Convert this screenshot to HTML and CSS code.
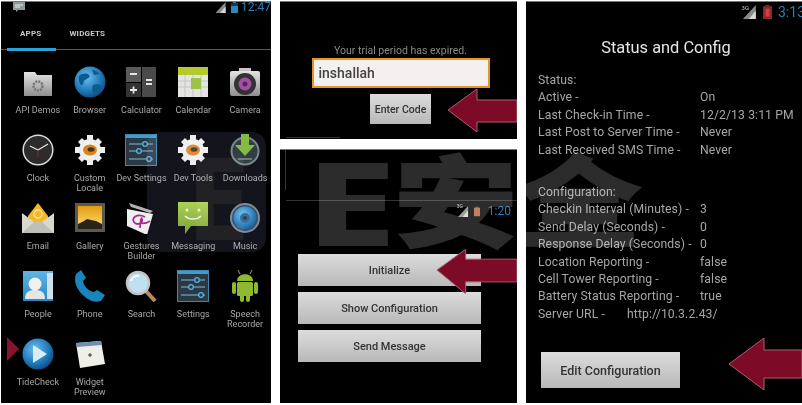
FILE: index.html
```html
<!DOCTYPE html>
<html lang="en">
<head>
<meta charset="utf-8">
<title>TideCheck screens</title>
<link rel="stylesheet" href="styles.css">
</head>
<body>
<svg class="defs" width="0" height="0" aria-hidden="true">
  <defs>
    <linearGradient id="gGrey" x1="0" y1="0" x2="0" y2="1"><stop offset="0" stop-color="#e4e4e4"/><stop offset="1" stop-color="#8f8f8f"/></linearGradient>
    <radialGradient id="gBlue" cx=".4" cy=".35" r=".75"><stop offset="0" stop-color="#6cc0ee"/><stop offset=".6" stop-color="#1f78b8"/><stop offset="1" stop-color="#0b3f70"/></radialGradient>
    <linearGradient id="gSun" x1="0" y1="0" x2="0" y2="1"><stop offset="0" stop-color="#e09a10"/><stop offset="1" stop-color="#ffe27a"/></linearGradient>
    <linearGradient id="gGreen" x1="0" y1="0" x2="0" y2="1"><stop offset="0" stop-color="#a4cc3e"/><stop offset="1" stop-color="#6f9a22"/></linearGradient>
    <linearGradient id="gCard" x1="0" y1="0" x2="0" y2="1"><stop offset="0" stop-color="#5fb5e8"/><stop offset="1" stop-color="#2a86c4"/></linearGradient>
    <symbol id="signal" viewBox="0 0 12 12"><path d="M0 12 11 0v12z" fill="#8a8a8a"/><path d="M5 12 11 5v7z" fill="#d8d8d8"/></symbol>
    <symbol id="cog" viewBox="0 0 32 32">
      <circle cx="16" cy="16" r="11" fill="#f2f2f2"/>
      <path d="M13 1h6v6h-6zM13 25h6v6h-6zM1 13h6v6H1zM25 13h6v6h-6zM4 8l4-4 5 5-4 4zM24 4l4 4-5 5-4-4zM4 24l5-5 4 4-5 5zM19 23l4-4 5 5-4 4z" fill="#ededed"/>
      <ellipse cx="16" cy="16" rx="7" ry="5.5" fill="#d9851f"/>
      <ellipse cx="17" cy="15.500" rx="3.500" ry="2.200" fill="#4a3218"/>
    </symbol>
    <symbol id="sliders" viewBox="0 0 32 32">
      <rect x=".5" y=".5" width="31" height="31" fill="#2a3a44" stroke="#3d86ad"/>
      <rect x="1" y="1" width="30" height="3" fill="#3f9ccc"/>
      <path d="M4 10h24M4 17h24M4 25h24" stroke="#6d8c9c" stroke-width="1.300"/>
      <circle cx="20" cy="10" r="2.300" fill="#2a3a44" stroke="#59b4e2" stroke-width="1.300"/>
      <circle cx="14" cy="17" r="2.300" fill="#2a3a44" stroke="#59b4e2" stroke-width="1.300"/>
      <circle cx="24" cy="25" r="2.300" fill="#2a3a44" stroke="#59b4e2" stroke-width="1.300"/>
    </symbol>
  </defs>
</svg>

<main class="page">
  <section class="panel launcher">
    <header class="status">
      <svg class="notif" viewBox="0 0 12 10"><path d="M0 0h12v8H5L3 10V8H0z" fill="#8d9a9a"/><path d="M2 3h8M2 5h5" stroke="#eee"/></svg>
      <svg class="sig" viewBox="0 0 12 12"><use href="#signal"/></svg>
      <svg class="bat" viewBox="0 0 7 11"><rect y="1" width="7" height="10" fill="#2d87ba"/><rect x="2" width="3" height="1" fill="#2d87ba"/><rect y="1" width="7" height="3" fill="#0d3a55"/></svg>
      <span class="time">12:47</span>
    </header>
    <nav class="tabs">
      <span class="tab tab-apps">APPS</span>
      <span class="tab">WIDGETS</span>
    </nav>
    <div class="grid">
      <div class="app"><svg class="icon" viewBox="0 0 32 32"><path d="M2 6h11l2 3h15v21H2z" fill="url(#gGrey)"/><circle cx="16" cy="20" r="4.500" fill="none" stroke="#777" stroke-width="2.500" stroke-dasharray="2 1"/></svg><span>API Demos</span></div>
      <div class="app"><svg class="icon" viewBox="0 0 32 32"><circle cx="16" cy="16" r="15.500" fill="url(#gBlue)"/><path d="M5 10c4-3 8-3 10-1s-2 4-4 5-1 4-3 5-4-5-3-9zM19 19c3-1 7-1 8 1s-3 6-6 7-3-6-2-8zM18 4c3 0 6 2 7 4l-5 1z" fill="#0d5a8c"/></svg><span>Browser</span></div>
      <div class="app"><svg class="icon" viewBox="0 0 32 32"><rect x="1" y="1" width="15" height="15" fill="#5a5a5a"/><rect x="17" y="1" width="14" height="30" fill="#4a4a4a"/><rect x="1" y="17" width="15" height="14" fill="#333"/><path d="M5 8h7M21 14h6M21 18h6M5 24h7M8.500 20.500v7" stroke="#e6e6e6" stroke-width="1.800" fill="none"/></svg><span>Calculator</span></div>
      <div class="app"><svg class="icon" viewBox="0 0 32 32"><rect x="1" y="1" width="30" height="30" fill="#e4e4e0"/><rect x="1" y="1" width="30" height="8" fill="#b4c92c"/><path d="M1 15h30M1 21h30M8 9v22M16 9v22M24 9v22" stroke="#c4c4c4"/><rect x="14" y="12" width="10" height="11" fill="#9dc24a"/></svg><span>Calendar</span></div>
      <div class="app"><svg class="icon" viewBox="0 0 32 32"><rect x="10" y="2" width="12" height="5" fill="#c4c4c4"/><rect x="1" y="5" width="30" height="25" rx="2" fill="url(#gGrey)"/><circle cx="16" cy="18" r="11" fill="#333"/><circle cx="16" cy="18" r="6.500" fill="#a24fa6"/><circle cx="16" cy="18" r="2.500" fill="#5d2360"/></svg><span>Camera</span></div>

      <div class="app"><svg class="icon" viewBox="0 0 32 32"><circle cx="16" cy="16" r="14.800" fill="#2e2c2a" stroke="#dcdcdc" stroke-width="1.500"/><path d="M16 16 8 12M16 16 26 10" stroke="#e8e8e8" stroke-width="1.200"/><path d="M16 16v7" stroke="#733" stroke-width="1"/></svg><span>Clock</span></div>
      <div class="app"><svg class="icon" viewBox="0 0 32 32"><use href="#cog"/></svg><span>Custom Locale</span></div>
      <div class="app"><svg class="icon" viewBox="0 0 32 32"><use href="#sliders"/></svg><span>Dev Settings</span></div>
      <div class="app"><svg class="icon" viewBox="0 0 32 32"><use href="#cog"/></svg><span>Dev Tools</span></div>
      <div class="app"><svg class="icon" viewBox="0 0 32 32"><circle cx="16" cy="17" r="13.500" fill="#222c2c" stroke="#6d7d7d" stroke-width="2"/><path d="M12 0h8v11h6l-10 11L6 11h6z" fill="#79b52b"/><path d="M9 25h14" stroke="#8a9a9a" stroke-width="1.200"/></svg><span>Downloads</span></div>

      <div class="app"><svg class="icon" viewBox="0 0 32 32"><path d="M6 14 16 1l10 13v8H6z" fill="#f2b92a"/><circle cx="16" cy="12" r="4" fill="none" stroke="#ffe596" stroke-width="1.300"/><path d="M0 11l16 12 16-12v20H0z" fill="#d8d8d0"/><path d="M0 31l12-11h8l12 11z" fill="#bfbfb8"/></svg><span>Email</span></div>
      <div class="app"><svg class="icon" viewBox="0 0 32 32"><rect x="1" y="1" width="30" height="29" fill="#5a5a54"/><rect x="4" y="4" width="24" height="23" fill="url(#gSun)"/><path d="M4 22l6-3 3-2 4 1 5 1 6 3v5H4z" fill="#2a2418"/></svg><span>Gallery</span></div>
      <div class="app"><svg class="icon" viewBox="0 0 32 32"><path d="M4 1l24 8-3 2-19-6z" fill="#aeb4b4"/><path d="M2 7l26 5-6 21L2 24z" fill="#efeeee"/><path d="M20 15c-8-4-14 1-11 5s9 1 8-3-2 9-2 9M15 21c4 1 7 0 10-2" fill="none" stroke="#a42b8e" stroke-width="1.800"/></svg><span>Gestures Builder</span></div>
      <div class="app"><svg class="icon" viewBox="0 0 32 32"><path d="M1 0h30v24H14l-6 8v-8H1z" fill="url(#gGreen)"/><circle cx="10" cy="8" r="1.500" fill="#eef6d0"/><circle cx="22" cy="8" r="1.500" fill="#eef6d0"/><path d="M8 14c4 4 12 4 16 0" fill="none" stroke="#eef6d0" stroke-width="1.500"/></svg><span>Messaging</span></div>
      <div class="app"><svg class="icon" viewBox="0 0 32 32"><circle cx="16" cy="16" r="14" fill="#24405f" stroke="#72808a" stroke-width="2"/><circle cx="16" cy="16" r="11.500" fill="url(#gBlue)"/><circle cx="16" cy="16" r="5" fill="#2f5e8c"/><circle cx="16" cy="16" r="2" fill="#183050"/></svg><span>Music</span></div>

      <div class="app"><svg class="icon" viewBox="0 0 32 32"><rect x="1" y="1" width="30" height="30" fill="url(#gCard)"/><rect x="25" y="3" width="6" height="26" fill="#cfe2ec"/><circle cx="13" cy="14" r="6.500" fill="#f0f0f0"/><path d="M3 29c0-7 4-9 10-9s10 2 10 9z" fill="#e6e6e6"/></svg><span>People</span></div>
      <div class="app"><svg class="icon" viewBox="0 0 32 32"><path d="M2 4 7 0l5 8-3 3c1 5 5 10 11 11l3-2 8 5-4 6c-8 3-16-3-21-9S0 9 2 4z" fill="#1a84bc"/></svg><span>Phone</span></div>
      <div class="app"><svg class="icon" viewBox="0 0 32 32"><path d="M21 21l9 10" stroke="#b98a58" stroke-width="4"/><circle cx="13" cy="13" r="11" fill="#bfe0ef" stroke="#c4c4c4" stroke-width="2.500"/><path d="M6 11c1-4 5-6 8-5" stroke="#fff" stroke-width="2" fill="none"/></svg><span>Search</span></div>
      <div class="app"><svg class="icon" viewBox="0 0 32 32"><use href="#sliders"/></svg><span>Settings</span></div>
      <div class="app"><svg class="icon" viewBox="0 0 32 32"><g fill="#8fb92e"><path d="M8 11c0-9 16-9 16 0z"/><rect x="8" y="12" width="16" height="14" rx="1.500"/><rect x="3" y="12" width="4" height="12" rx="2"/><rect x="25" y="12" width="4" height="12" rx="2"/><rect x="11" y="24" width="4" height="8" rx="2"/><rect x="17" y="24" width="4" height="8" rx="2"/></g><path d="M11 4 9 0M21 4l2-4" stroke="#8fb92e"/></svg><span>Speech Recorder</span></div>

      <div class="app"><svg class="icon" viewBox="0 0 32 32"><circle cx="16" cy="16" r="15.500" fill="url(#gBlue)"/><path d="M11 7l14 9-14 9z" fill="#d8ecf8"/></svg><span>TideCheck</span></div>
      <div class="app"><svg class="icon" viewBox="0 0 32 32"><path d="M2 5 27 3l4 23L6 30z" fill="#efefe8"/><path d="M2 5 27 3l.6 4L2.600 9z" fill="#6b8fb5"/><path d="M14 17h4M16 15v4" stroke="#333"/></svg><span>Widget Preview</span></div>
    </div>
    <svg class="marker" viewBox="0 0 12 24"><path d="M0 0l12 12L0 24z" fill="#8a1231"/></svg>
  </section>

  <div class="mid">
    <section class="panel trial">
      <p class="expired">Your trial period has expired.</p>
      <div class="code-input">inshallah</div>
      <div class="btn btn-code">Enter Code</div>
      <svg class="arrow arrow-code" viewBox="0 0 69 43"><path d="M0 21 29 0v11h40v22H29v10z" fill="#7d0a26" stroke="#a8606e"/></svg>
      <i class="scan scan-a"></i>
    </section>
    <section class="panel home">
      <i class="scan scan-b"></i>
      <i class="scan scan-c"></i>
      <header class="status status-home">
        <span class="net net-s">3G</span>
        <svg class="sig3g" viewBox="0 0 12 12"><use href="#signal"/></svg>
        <svg class="bat batred" viewBox="0 0 7 11"><rect y="1" width="7" height="10" fill="#b8643a"/><rect x="2" width="3" height="1" fill="#b8643a"/></svg>
        <span class="time">1:20</span>
      </header>
      <div class="actions">
        <div class="btn btn-wide">Initialize</div>
        <div class="btn btn-wide">Show Configuration</div>
        <div class="btn btn-wide">Send Message</div>
      </div>
      <svg class="arrow arrow-init" viewBox="0 0 81 45"><path d="M0 21 29 0v10h52v23H29v12z" fill="#7d0a26" stroke="#a8606e"/></svg>
    </section>
  </div>

  <section class="panel config">
    <header class="status status-config">
      <span class="net net-l">3G</span>
      <svg class="sig3g-l" viewBox="0 0 12 12"><use href="#signal"/></svg>
      <svg class="bat-l" viewBox="0 0 7 11"><rect y="1" width="7" height="10" fill="#8d2a2a"/><rect x="2" width="3" height="1" fill="#8d2a2a"/><rect x="2" y="3" width="3" height="6" fill="#d04040"/></svg>
      <span class="time time-l">3:13</span>
    </header>
    <h1 class="title">Status and Config</h1>
    <div class="lines">
      <div class="line">Status:</div>
      <div class="line"><span class="key">Active -</span><span>On</span></div>
      <div class="line"><span class="key">Last Check-in Time -</span><span>12/2/13 3:11 PM</span></div>
      <div class="line"><span class="key">Last Post to Server Time -</span><span>Never</span></div>
      <div class="line"><span class="key">Last Received SMS Time -</span><span>Never</span></div>
      <div class="line line-gap">Configuration:</div>
      <div class="line"><span class="key">Checkin Interval (Minutes) -</span><span>3</span></div>
      <div class="line"><span class="key">Send Delay (Seconds) -</span><span>0</span></div>
      <div class="line"><span class="key">Response Delay (Seconds) -</span><span>0</span></div>
      <div class="line"><span class="key">Location Reporting -</span><span>false</span></div>
      <div class="line"><span class="key">Cell Tower Reporting -</span><span>false</span></div>
      <div class="line"><span class="key">Battery Status Reporting -</span><span>true</span></div>
      <div class="line"><span class="key key-url">Server URL -</span><span>http://10.3.2.43/</span></div>
    </div>
    <div class="btn btn-edit">Edit Configuration</div>
    <svg class="arrow arrow-edit" viewBox="0 0 73 52"><path d="M0 26 35 0v12h38v28H35v12z" fill="#7d0a26" stroke="#a8606e"/></svg>
  </section>
</main>

<svg class="watermark" viewBox="0 0 802 405" aria-hidden="true">
  <rect x="147" y="132" width="119" height="120" rx="14" fill="#14151c"/>
  <text class="wm-logo" x="186" y="240">E</text>
  <text class="wm-text" transform="translate(306 245) scale(1.42 1)">E</text>
  <text class="wm-text wm-cjk" transform="translate(394 238) scale(1.26 1)">安全</text>
</svg>
</body>
</html>
```

FILE: styles.css
```css
* { box-sizing: border-box; }
html, body { margin: 0; padding: 0; background: #fff; }
body { width: 802px; height: 405px; overflow: hidden; position: relative; font-family: Roboto, "Liberation Sans", sans-serif; }
.defs { position: absolute; }

.page { display: flex; gap: 9px; height: 405px; padding: 1px 0 2px 1px; }
.panel { position: relative; background: #000; overflow: hidden; filter: blur(0.45px); box-shadow: inset 0 1px 0 #777; }
.launcher { width: 270px; }
.mid { width: 237px; display: flex; flex-direction: column; gap: 10px; }
.config { flex: 1; }

/* status bars */
.status { display: flex; align-items: center; height: 12px; color: #2a7fb5; }
.launcher .status { padding: 0 0 0 12px; }
.notif { width: 12px; height: 10px; margin-right: auto; }
.sig { width: 12px; height: 11px; }
.bat { width: 7px; height: 11px; margin: 0 3px 0 4px; }
.time { font-size: 12px; line-height: 12px; color: #2a80b4; }
.net { font-size: 5px; line-height: 5px; color: #c8c8c8; align-self: flex-start; }

/* launcher */
.tabs { display: flex; height: 36px; margin-top: 1px; padding: 15px 0 0 19px; gap: 28px; border-bottom: 1px solid #17708f; position: relative; }
.tab { font-size: 8px; line-height: 10px; font-weight: 700; color: #c8c8c8; letter-spacing: 0.2px; }
.tab-apps::after { content: ""; position: absolute; left: 6px; bottom: -2px; width: 49px; height: 3px; background: #2aa3d6; }
.grid { display: grid; grid-template-columns: repeat(5, 51.8px); grid-auto-rows: 68px; padding: 16px 0 0 11px; }
.app { display: flex; flex-direction: column; align-items: center; text-align: center; }
.app span { margin-top: 7px; font-size: 9px; line-height: 10px; color: #a8a8a8; max-width: 52px; }
.icon { width: 32px; height: 32px; flex: none; }
.marker { position: absolute; left: 6px; top: 336px; width: 12px; height: 24px; }

/* trial panel */
.trial { height: 138px; display: flex; flex-direction: column; align-items: center; padding: 44px 0 0 4px; }
.expired { margin: 0 0 1px 0; height: 12px; font-size: 10.500px; line-height: 12px; color: #8a8a8a; }
.code-input { width: 178px; height: 30px; background: #f4f0f0; border: 2px solid #e6932c; padding-left: 5px; font-size: 14px; line-height: 26px; font-weight: 500; color: #444; }
.btn { background: linear-gradient(#dcdcdc, #b8b8b8); color: #333; font-weight: 500; text-align: center; }
.btn-code { width: 61px; height: 30px; margin-top: 6px; font-size: 10.500px; line-height: 32px; }

/* home panel */
.home { flex: 1; padding: 55px 6px 0 18px; }
.status-home { justify-content: flex-end; height: 14px; gap: 4px; }
.net-s { margin-right: -9px; }
.sig3g { width: 11px; height: 11px; }
.batred { width: 6px; height: 11px; margin: 0 4px 0 1px; }
.actions { display: flex; flex-direction: column; gap: 6px; width: 183px; margin-top: 36px; }
.btn-wide { height: 32px; font-size: 11px; line-height: 34px; }

/* faint scan lines left by the screenshot */
.scan { position: absolute; background: #333; }
.scan-a { left: 6px; bottom: 1px; width: 54px; height: 1px; }
.scan-b { left: 6px; top: 51px; right: 0; height: 1px; }
.scan-c { left: 5px; top: 1px; width: 1px; height: 40px; }

/* config panel */
.config { padding: 0 0 0 12px; }
.status-config { justify-content: flex-end; height: 20px; padding-top: 2px; }
.net-l { font-size: 6px; margin: 2px -6px 0 0; }
.sig3g-l { width: 14px; height: 14px; }
.bat-l { width: 9px; height: 14px; margin: 0 6px; }
.time-l { font-size: 14px; line-height: 16px; width: 24px; white-space: nowrap; }
.title { margin: 17px 0 0 0; height: 20px; text-align: center; padding-right: 8px; font-size: 16.400px; line-height: 20px; font-weight: 400; color: #e6e6e6; }
.lines { margin-top: 14px; }
.line { display: flex; height: 17.400px; font-size: 12.200px; line-height: 17.400px; color: #a6a6a6; white-space: nowrap; letter-spacing: .1px; }
.line-gap { margin-top: 25px; }
.key { width: 162px; flex: none; }
.key-url { width: 89px; }
.btn-edit { width: 139px; height: 36px; margin: 29px 0 0 3px; font-size: 12.500px; line-height: 38px; }

/* annotation arrows */
.arrow { position: absolute; }
.arrow-code { left: 168px; top: 88px; width: 69px; height: 43px; }
.arrow-init { left: 157px; top: 100px; width: 80px; height: 45px; }
.arrow-edit { right: 0; top: 337px; width: 73px; height: 52px; }

/* watermark */
.watermark { position: absolute; left: 0; top: 0; width: 802px; height: 405px; mix-blend-mode: screen; pointer-events: none; }
.wm-logo { font-family: "Noto Sans", sans-serif; font-weight: 700; font-size: 115px; fill: #222226; }
.wm-text { font-family: "Noto Sans", sans-serif; font-weight: 700; font-size: 113px; fill: #2c2c2c; stroke: #2c2c2c; stroke-width: 2px; }
.wm-cjk { font-family: "Noto Sans CJK SC", sans-serif; font-weight: 900; font-size: 98px; }
```
